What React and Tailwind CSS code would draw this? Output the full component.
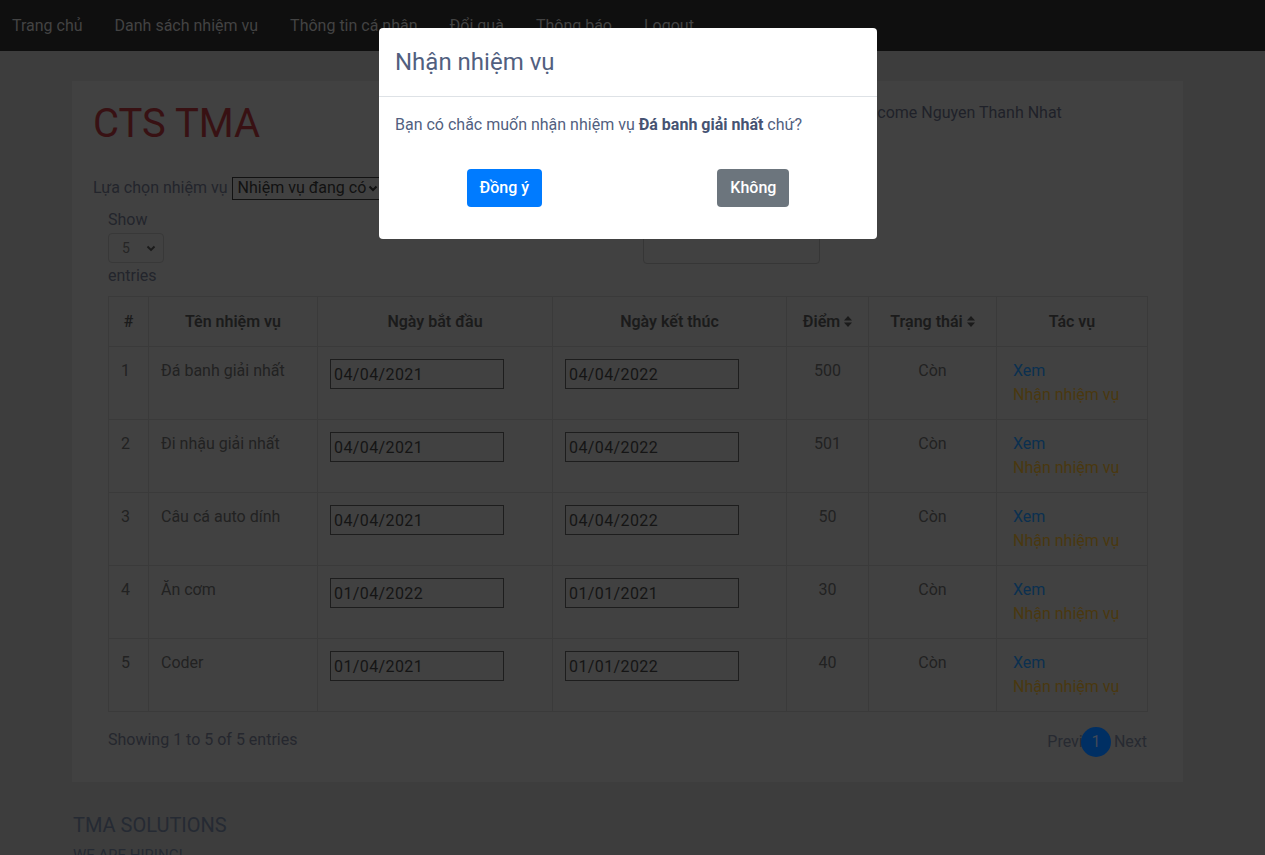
import React from 'react';

const tasks = [
    { id: 1, name: 'Đá banh giải nhất', start: '04/04/2021', end: '04/04/2022', points: 500 },
    { id: 2, name: 'Đi nhậu giải nhất', start: '04/04/2021', end: '04/04/2022', points: 501 },
    { id: 3, name: 'Câu cá auto dính', start: '04/04/2021', end: '04/04/2022', points: 50 },
    { id: 4, name: 'Ăn cơm', start: '01/04/2022', end: '01/01/2021', points: 30 },
    { id: 5, name: 'Coder', start: '01/04/2021', end: '01/01/2022', points: 40 },
];

const navItems = ['Trang chủ', 'Danh sách nhiệm vụ', 'Thông tin cá nhân', 'Đổi quà', 'Thông báo', 'Logout'];

function SortIcon() {
    return (
        <svg width="8" height="11" viewBox="0 0 8 11" className="inline-block ml-1 -mt-0.5">
            <path d="M4 0 L8 4.5 L0 4.5 Z" fill="#1b1b1b" />
            <path d="M4 11 L8 6.5 L0 6.5 Z" fill="#1b1b1b" />
        </svg>
    );
}

function DateBox({ value }) {
    return (
        <input
            readOnly
            value={value}
            className="w-[174px] h-[30px] border border-[#1d1d1d] bg-transparent px-[3px] text-[16px] tracking-[0.4px] text-[#151515] outline-none"
        />
    );
}

export default function App() {
    return (
        <div className="relative min-h-[855px] bg-[#3d3d3d] overflow-hidden font-['Roboto',sans-serif] text-[16px] leading-6">
            {/* navbar */}
            <nav className="h-[51px] bg-[#0f0f0f] flex items-center pl-3 gap-8">
                {navItems.map(item => (
                    <span key={item} className="text-[#434343]">{item}</span>
                ))}
            </nav>

            {/* main card */}
            <div className="ml-[72px] mt-[30px] w-[1111px] bg-[#414141] px-[21px] pt-[19px] pb-[25px]">
                <div className="flex">
                    <h1 className="w-[756px] text-[40px] leading-[48px] text-[#381113]">CTS TMA</h1>
                    <p className="mt-[1px] ml-[2px] text-[#1f2129]">Welcome Nguyen Thanh Nhat</p>
                </div>

                <div className="mt-[28px] flex items-center text-[#23252c]">
                    <span>Lựa chọn nhiệm vụ</span>
                    <div className="ml-[4px] h-[23px] border border-[#121212] flex items-center pl-[5px] pr-[2px] text-[#111]">
                        Nhiệm vụ đang có
                        <svg width="10" height="10" viewBox="0 0 10 10" className="ml-[2px]">
                            <path d="M1.5 3.5 L5 7 L8.5 3.5" stroke="#111" strokeWidth="2" fill="none" />
                        </svg>
                    </div>
                </div>

                <div className="px-[15px] mt-[8px]">
                    <div className="flex">
                        <div className="w-[520px] text-[#23252c]">
                            <div>Show</div>
                            <div className="mt-[1px] w-[56px] h-[30px] border border-[#383838] rounded-[4px] flex items-center justify-between pl-[13px] pr-[7px] text-[14px] text-[#252525]">
                                5
                                <svg width="10" height="10" viewBox="0 0 10 10">
                                    <path d="M1.5 3.5 L5 7 L8.5 3.5" stroke="#1a1a1a" strokeWidth="1.8" fill="none" />
                                </svg>
                            </div>
                            <div className="mt-[1px]">entries</div>
                        </div>
                        <div className="pl-[15px] text-[#23252c]">
                            <div>Search:</div>
                            <div className="mt-[1px] w-[177px] h-[31px] border border-[#363636] rounded-[4px]" />
                        </div>
                    </div>

                    <table className="mt-[8px] w-[1039px] table-fixed border-collapse text-[#222]">
                        <thead>
                            <tr className="h-[50px] text-[#1b1b1b]">
                                <th className="w-[40px] border border-[#3a3a3a] font-semibold">#</th>
                                <th className="w-[169px] border border-[#3a3a3a] font-semibold">Tên nhiệm vụ</th>
                                <th className="w-[235px] border border-[#3a3a3a] font-semibold">Ngày bắt đầu</th>
                                <th className="w-[234px] border border-[#3a3a3a] font-semibold">Ngày kết thúc</th>
                                <th className="w-[82px] border border-[#3a3a3a] font-semibold">Điểm<SortIcon /></th>
                                <th className="w-[128px] border border-[#3a3a3a] font-semibold">Trạng thái<SortIcon /></th>
                                <th className="w-[151px] border border-[#3a3a3a] font-semibold">Tác vụ</th>
                            </tr>
                        </thead>
                        <tbody>
                            {tasks.map(t => (
                                <tr key={t.id} className="align-top h-[73px]">
                                    <td className="border border-[#3a3a3a] px-3 py-3">{t.id}</td>
                                    <td className="border border-[#3a3a3a] px-3 py-3">{t.name}</td>
                                    <td className="border border-[#3a3a3a] px-3 pt-[12px]"><DateBox value={t.start} /></td>
                                    <td className="border border-[#3a3a3a] px-3 pt-[12px]"><DateBox value={t.end} /></td>
                                    <td className="border border-[#3a3a3a] px-3 py-3 text-center">{t.points}</td>
                                    <td className="border border-[#3a3a3a] px-3 py-3 text-center">Còn</td>
                                    <td className="border border-[#3a3a3a] px-4 py-3">
                                        <div className="text-[#0b3050]">Xem</div>
                                        <div className="text-[#4a380f]">Nhận nhiệm vụ</div>
                                    </td>
                                </tr>
                            ))}
                        </tbody>
                    </table>

                    <div className="mt-[16px] flex items-start justify-between">
                        <span className="text-[#25272e]">Showing 1 to 5 of 5 entries</span>
                        <div className="-mt-[1px] flex items-center text-[#272a31]">
                            <span>Previous</span>
                            <span className="relative -ml-[28px] w-[30px] h-[30px] rounded-full bg-[#002f63] flex items-center justify-center text-[#404a58]">1</span>
                            <span className="ml-[3px]">Next</span>
                        </div>
                    </div>
                </div>
            </div>

            {/* footer */}
            <div className="ml-[73px] mt-[30px]">
                <div className="text-[20px] leading-[26px] text-[#252a33]">TMA SOLUTIONS</div>
                <div className="mt-[5px] text-[15px] text-[#252a33]">WE ARE HIRING!</div>
            </div>

            {/* modal */}
            <div className="absolute left-[379px] top-[28px] w-[498px] bg-white rounded-[4px] text-[#525f7f]">
                <div className="px-4 py-4 border-b border-[#dee2e6]">
                    <h5 className="text-[24px] leading-[36px]">Nhận nhiệm vụ</h5>
                </div>
                <div className="p-4">
                    Bạn có chắc muốn nhận nhiệm vụ <b className="font-bold text-[#465372]">Đá banh giải nhất</b> chứ?
                </div>
                <div className="flex justify-around pt-4 pb-8">
                    <button className="h-[38px] px-[13px] rounded-[4px] bg-[#007bff] text-white font-medium">Đồng ý</button>
                    <button className="h-[38px] px-[13px] rounded-[4px] bg-[#6c757d] text-white font-medium">Không</button>
                </div>
            </div>
        </div>
    );
}
